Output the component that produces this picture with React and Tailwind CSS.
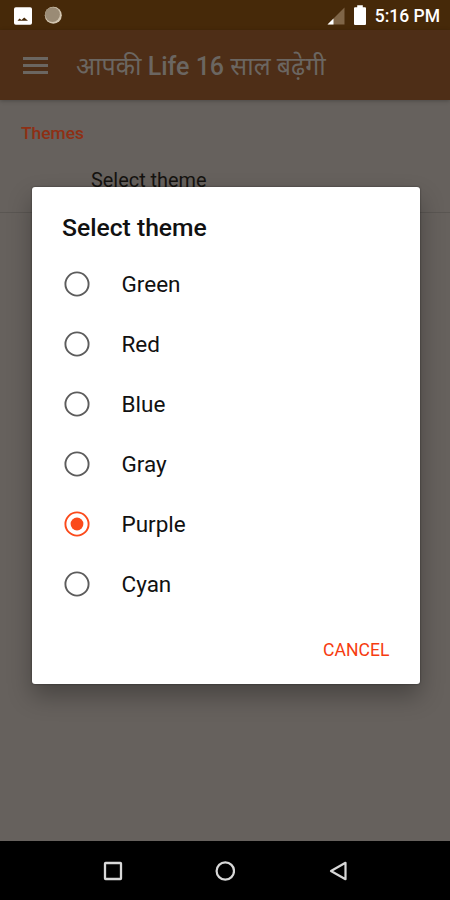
import { useState } from "react";

const THEMES = ["Green", "Red", "Blue", "Gray", "Purple", "Cyan"];

function StatusBar() {
    return (
        <div className="h-[30px] shrink-0 bg-[#462909] flex items-center justify-between pl-[14px] pr-[10px]">
            <div className="flex items-center gap-[11px]">
                <svg className="w-[19px] h-[18px] mt-[1px]" viewBox="0 0 19 18">
                    <rect x="0" y="0.3" width="18" height="17.5" rx="1.8" fill="#fff" />
                    <path d="M3.5 13.8l2-2.2 2 1.4 2.7-2.6 3.8 3.4z" fill="#462909" />
                </svg>
                <svg className="w-[19px] h-[19px]" viewBox="0 0 19 19">
                    <circle cx="9.3" cy="9.3" r="8.5" fill="#d3c6b1" />
                    <circle cx="8.5" cy="8.6" r="7.4" fill="#9a8b75" />
                </svg>
            </div>
            <div className="flex items-center">
                <svg className="w-[18px] h-[18px] mr-[9px] mt-[1px]" viewBox="0 0 18 18">
                    <path d="M17.5 0.5v17H0.5z" fill="#7f6547" />
                    <path d="M6.5 11.5v6h-6z" fill="#fff" />
                </svg>
                <svg className="w-[12px] h-[20px] mr-[9px]" viewBox="0 0 12 20">
                    <path d="M3.2 0.3h5.6v2H11q1 0 1 1v15.7q0 1-1 1h-10q-1 0-1-1v-15.7q0-1 1-1h2.2z" fill="#fff" />
                </svg>
                <span className="text-[17.5px] leading-[30px] font-medium text-white pt-[2px]">5:16 PM</span>
            </div>
        </div>
    );
}

function AppBar() {
    return (
        <div className="relative h-[70px] shrink-0 bg-[#4e2e17] flex items-center pl-[23px] shadow-[0_1px_4px_rgba(0,0,0,0.25)]">
            <div className="w-[25px] flex flex-col gap-[4px]">
                <div className="h-[3px] bg-[#6b6661]" />
                <div className="h-[3px] bg-[#6b6661]" />
                <div className="h-[3px] bg-[#6b6661]" />
            </div>
            <h1 className="ml-[28px] pt-[4px] text-[25px] leading-[34px] text-[#6b6661] whitespace-nowrap">
                आपकी <span className="font-medium">Life 16</span> साल बढ़ेगी
            </h1>
        </div>
    );
}

function Radio({ checked }) {
    const color = checked ? "#fb4a1b" : "#5c5c5c";
    return (
        <svg className="w-[26px] h-[26px] shrink-0" viewBox="0 0 26 26">
            <circle cx="13" cy="13" r="11.6" fill="none" stroke={color} strokeWidth="1.9" />
            {checked && <circle cx="13" cy="13" r="6.4" fill={color} />}
        </svg>
    );
}

function ThemeDialog({ selected, onSelect }) {
    return (
        <div className="absolute left-[31.5px] top-[187px] w-[388px] h-[497px] bg-white rounded-[3px] flex flex-col shadow-[0_0_2px_rgba(0,0,0,0.5),0_12px_24px_rgba(0,0,0,0.3)]">
            <h2 className="pl-[30.5px] pt-[24px] text-[24.7px] leading-[34px] font-medium text-[#111]">Select theme</h2>
            <div className="mt-[9px] flex flex-col">
                {THEMES.map((name) => (
                    <button
                        key={name}
                        onClick={() => onSelect(name)}
                        className="h-[60px] flex items-center pl-[32px] text-left"
                    >
                        <Radio checked={name === selected} />
                        <span className="ml-[32px] text-[22.5px] leading-[30px] text-[#111]">{name}</span>
                    </button>
                ))}
            </div>
            <div className="flex-1 flex justify-end items-center pr-[30px] pt-[1px]">
                <button className="text-[17.6px] leading-[24px] text-[#f63c10]">CANCEL</button>
            </div>
        </div>
    );
}

function NavBar() {
    return (
        <div className="h-[59.5px] shrink-0 bg-black flex items-center justify-around pl-[57px] pr-[56px] pt-[0.5px]">
            <svg className="w-[20px] h-[20px]" viewBox="0 0 20 20" fill="none" stroke="#d8d8d8" strokeWidth="2.3">
                <rect x="2" y="2" width="16" height="16" rx="0.6" />
            </svg>
            <svg className="w-[20px] h-[20px]" viewBox="0 0 20 20" fill="none" stroke="#d8d8d8" strokeWidth="2.2">
                <circle cx="10.3" cy="10" r="8.7" />
            </svg>
            <svg className="w-[20px] h-[20px]" viewBox="0 0 20 20" fill="none" stroke="#d8d8d8" strokeWidth="2.2" strokeLinejoin="round">
                <path d="M17.5 1.8v16.4L3 10z" />
            </svg>
        </div>
    );
}

export default function App() {
    const [theme, setTheme] = useState("Purple");

    return (
        <div className="relative w-[450px] h-[900px] overflow-hidden flex flex-col bg-[#66615d] font-[Roboto,'Noto_Sans',sans-serif]">
            <StatusBar />
            <AppBar />
            <main className="flex-1 min-h-0">
                <div className="pl-[21px] pt-[21px] text-[17.4px] leading-[24px] font-medium text-[#8e2f14]">Themes</div>
                <div className="h-[68px] pl-[91px] pt-[24px] text-[19.9px] leading-[24px] text-[#151310] border-b border-[#5a5652]">
                    Select theme
                </div>
            </main>
            <NavBar />
            <ThemeDialog selected={theme} onSelect={setTheme} />
        </div>
    );
}
